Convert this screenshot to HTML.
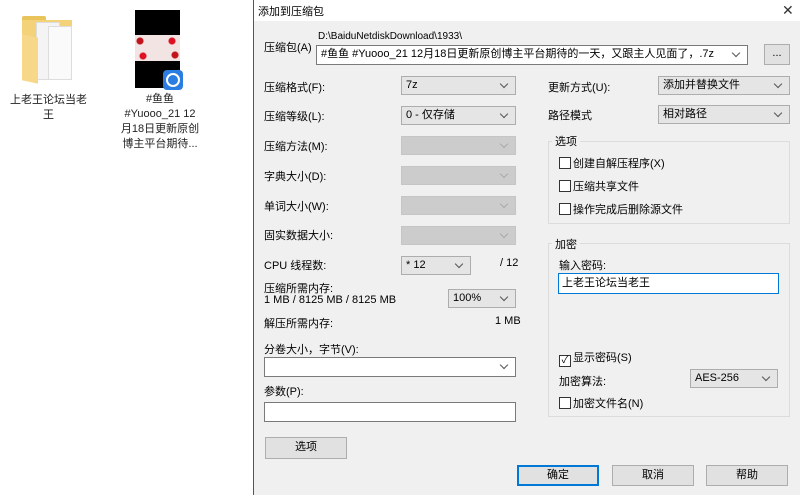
<!DOCTYPE html>
<html><head><meta charset="utf-8"><style>
*{margin:0;padding:0;box-sizing:border-box}
body{width:800px;height:495px;overflow:hidden;background:#fff;font-family:"Liberation Sans","Noto Sans CJK SC",sans-serif;font-size:11px;color:#000;position:relative}
.a{position:absolute;white-space:nowrap}
.dlg{position:absolute;left:253px;top:0;width:547px;height:495px;background:#f0f0f0;border-left:1px solid #555}
.tb{position:absolute;left:0;top:0;width:547px;height:21px;background:#fff}
.cb{position:absolute;background:#e5e5e5;border:1px solid #adadad;padding-left:4px;line-height:16px}
.cb::after{content:"";position:absolute;right:8px;top:4px;width:5px;height:5px;border-right:1px solid #555;border-bottom:1px solid #555;transform:rotate(45deg)}
.dis{background:#ccc;border-color:#c5c5c5}
.dis::after{border-color:#aaa}
.wh{background:#fff;border-color:#7a7a7a}
.btn{position:absolute;background:#e1e1e1;border:1px solid #adadad;text-align:center;line-height:19px}
.grp{position:absolute;border:1px solid #dcdcdc}
.gt{position:absolute;background:#f0f0f0;padding:0 3px}
.chk{display:inline-block;width:12px;height:12px;border:1px solid #333;vertical-align:-2px;margin-right:2px;background:#fff;position:relative}
.c{position:absolute;text-align:center;color:#222;font-size:11px;line-height:15px}
</style></head><body>
<div class="a" style="left:22px;top:16px;width:50px;height:70px">
 <div class="a" style="left:0;top:0;width:24px;height:8px;background:#e8c45a;border-radius:2px 2px 0 0"></div>
 <div class="a" style="left:0;top:4px;width:50px;height:60px;background:#f3d27a"></div>
 <div class="a" style="left:14px;top:6px;width:24px;height:58px;background:#f4f4f4;border:1px solid #ddd"></div>
 <div class="a" style="left:26px;top:10px;width:24px;height:54px;background:#fafafa;border:1px solid #ddd"></div>
 <div class="a" style="left:0;top:20px;width:16px;height:46px;background:#f7d88a;transform:skewY(12deg)"></div>
</div>
<div class="c" style="left:6px;top:93px;width:85px">上老王论坛当老<br>王</div>
<div class="a" style="left:135px;top:10px;width:45px;height:78px;background:#000"></div>
<div class="a" style="left:135px;top:35px;width:45px;height:26px;background:#f3e4e4"></div>
<div class="a" style="left:135px;top:35px;width:45px;height:26px;background:radial-gradient(circle at 5px 6px,#c0141a 3px,transparent 4px),radial-gradient(circle at 40px 20px,#c0141a 3px,transparent 4px),radial-gradient(circle at 8px 21px,#d12 3px,transparent 4px),radial-gradient(circle at 37px 6px,#d12 3px,transparent 4px)"></div>
<div class="a" style="left:163px;top:70px;width:20px;height:20px;background:#2a7de1;border-radius:4px"></div>
<div class="a" style="left:166px;top:73px;width:14px;height:14px;border:2px solid #fff;border-radius:50%"></div>
<div class="c" style="left:115px;top:92px;width:90px">#鱼鱼<br>#Yuooo_21 12<br>月18日更新原创<br>博主平台期待...</div>

<div class="dlg">
 <div class="tb"></div>
 <div class="a" style="left:4px;top:3px">添加到压缩包</div>
 <div class="a" style="left:528px;top:2px;font-size:14px;color:#333">✕</div>
</div>
<div class="a" style="left:264px;top:39px">压缩包(A)</div>
<div class="a" style="left:318px;top:31px;font-size:10px">D:\BaiduNetdiskDownload\1933\</div>
<div class="cb wh" style="left:316px;top:45px;width:432px;height:20px;line-height:17px">#鱼鱼 #Yuooo_21 12月18日更新原创博主平台期待的一天，又跟主人见面了，.7z</div>
<div class="btn" style="left:764px;top:44px;width:26px;height:21px;line-height:16px">...</div>

<div class="a" style="left:264px;top:79px">压缩格式(F):</div>
<div class="cb" style="left:401px;top:76px;width:115px;height:19px">7z</div>
<div class="a" style="left:264px;top:108px">压缩等级(L):</div>
<div class="cb" style="left:401px;top:106px;width:115px;height:19px">0 - 仅存储</div>
<div class="a" style="left:264px;top:138px">压缩方法(M):</div>
<div class="cb dis" style="left:401px;top:136px;width:115px;height:19px"></div>
<div class="a" style="left:264px;top:168px">字典大小(D):</div>
<div class="cb dis" style="left:401px;top:166px;width:115px;height:19px"></div>
<div class="a" style="left:264px;top:198px">单词大小(W):</div>
<div class="cb dis" style="left:401px;top:196px;width:115px;height:19px"></div>
<div class="a" style="left:264px;top:227px">固实数据大小:</div>
<div class="cb dis" style="left:401px;top:226px;width:115px;height:19px"></div>
<div class="a" style="left:264px;top:257px">CPU 线程数:</div>
<div class="cb" style="left:401px;top:256px;width:70px;height:19px">* 12</div>
<div class="a" style="left:500px;top:257px">/ 12</div>
<div class="a" style="left:264px;top:280px">压缩所需内存:</div>
<div class="a" style="left:264px;top:294px">1 MB / 8125 MB / 8125 MB</div>
<div class="cb" style="left:448px;top:289px;width:68px;height:19px">100%</div>
<div class="a" style="left:264px;top:315px">解压所需内存:</div>
<div class="a" style="left:495px;top:315px">1 MB</div>
<div class="a" style="left:264px;top:341px">分卷大小，字节(V):</div>
<div class="cb wh" style="left:264px;top:357px;width:252px;height:20px"></div>
<div class="a" style="left:264px;top:383px">参数(P):</div>
<div class="a" style="left:264px;top:402px;width:252px;height:20px;background:#fff;border:1px solid #7a7a7a"></div>
<div class="btn" style="left:265px;top:437px;width:82px;height:22px">选项</div>

<div class="a" style="left:548px;top:79px">更新方式(U):</div>
<div class="cb" style="left:658px;top:76px;width:132px;height:19px">添加并替换文件</div>
<div class="a" style="left:548px;top:107px">路径模式</div>
<div class="cb" style="left:658px;top:105px;width:132px;height:19px">相对路径</div>

<div class="grp" style="left:548px;top:141px;width:242px;height:83px"></div>
<div class="gt" style="left:552px;top:133px">选项</div>
<div class="a" style="left:559px;top:155px"><span class="chk"></span>创建自解压程序(X)</div>
<div class="a" style="left:559px;top:178px"><span class="chk"></span>压缩共享文件</div>
<div class="a" style="left:559px;top:201px"><span class="chk"></span>操作完成后删除源文件</div>

<div class="grp" style="left:548px;top:243px;width:242px;height:174px"></div>
<div class="gt" style="left:552px;top:236px">加密</div>
<div class="a" style="left:559px;top:257px">输入密码:</div>
<div class="a" style="left:558px;top:273px;width:221px;height:21px;background:#fff;border:1px solid #0078d7;padding-left:3px;line-height:19px">上老王论坛当老王</div>
<div class="a" style="left:559px;top:349px"><span class="chk" style="text-align:center;line-height:9px;font-size:10px">✓</span>显示密码(S)</div>
<div class="a" style="left:559px;top:373px">加密算法:</div>
<div class="cb" style="left:690px;top:369px;width:88px;height:19px">AES-256</div>
<div class="a" style="left:559px;top:395px"><span class="chk"></span>加密文件名(N)</div>

<div class="btn" style="left:517px;top:465px;width:82px;height:21px;border:2px solid #0078d7;line-height:17px">确定</div>
<div class="btn" style="left:612px;top:465px;width:82px;height:21px">取消</div>
<div class="btn" style="left:706px;top:465px;width:82px;height:21px">帮助</div>
</body></html>
